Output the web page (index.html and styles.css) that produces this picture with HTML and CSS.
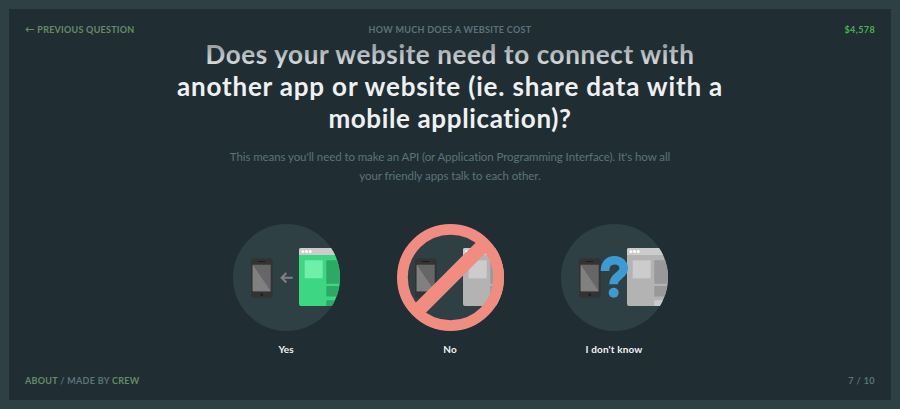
FILE: index.html
```
<!DOCTYPE html>
<html lang="en">
  <head>
    <meta charset="utf-8">
    <title>How much does a website cost</title>
    <link rel="stylesheet" href="styles.css">
  </head>
  <body>
    <div class="panel">
      <header class="top-bar">
        <a class="previous" href="#"><span class="arrow">←</span> Previous question</a>
        <span class="quiz-title">How much does a website cost</span>
        <span class="price">$4,578</span>
      </header>

      <main class="question">
        <h1>
          <span class="line line-1">Does your website need to connect with</span>
          <span class="line line-2">another app or website (ie. share data with a</span>
          <span class="line line-3">mobile application)?</span>
        </h1>
        <p class="hint">
          <span class="line">This means you'll need to make an API (or Application Programming Interface). It's how all</span>
          <span class="line">your friendly apps talk to each other.</span>
        </p>

        <div class="answers">
          <a class="answer" href="#">
            <svg class="icon" viewBox="0 0 107 107">
              <defs>
                <clipPath id="circle"><circle cx="53.5" cy="53.5" r="53.5"/></clipPath>
                <g id="phone">
                  <rect x="18" y="34.3" width="21.7" height="39.4" rx="2" fill="#333"/>
                  <rect x="19.7" y="40.7" width="18" height="26.6" fill="#666"/>
                  <path d="M19.7 40.7L37.7 67.3H19.7z" fill="#808080"/>
                  <path d="M25 37.5h7" stroke="#1c1c1c" stroke-width="1"/>
                  <circle cx="28.7" cy="70.8" r="1.3" fill="#1c1c1c"/>
                </g>
                <g id="window">
                  <rect class="page" x="66" y="24" width="60" height="58" rx="2"/>
                  <path d="M66 31v-5q0-2 2-2h50v7z" fill="#ccc"/>
                  <g fill="#fff">
                    <circle cx="69.8" cy="27.5" r="1.5"/>
                    <circle cx="73.5" cy="27.5" r="1.5"/>
                    <circle cx="77.2" cy="27.5" r="1.5"/>
                  </g>
                  <rect class="photo" x="71.7" y="36.3" width="18" height="18"/>
                  <path class="block" d="M93.3 36.3H118v23.4H93.3zM93.3 62H118v10.4H93.3z"/>
                  <path class="last" d="M93.3 76.3H118V82H93.3z"/>
                </g>
              </defs>
              <circle cx="53.5" cy="53.5" r="53.5" fill="#2f4045"/>
              <use href="#phone"/>
              <path d="M59.7 53.7H49M53.3 49l-4.6 4.7 4.6 4.7" fill="none" stroke="#808080" stroke-width="2.1"/>
              <g clip-path="url(#circle)"><use class="green" href="#window"/></g>
            </svg>
            <span>Yes</span>
          </a>

          <a class="answer" href="#">
            <svg class="icon" viewBox="0 0 107 107">
              <circle cx="53.5" cy="53.5" r="53" fill="#2f4045"/>
              <use href="#phone"/>
              <g clip-path="url(#circle)"><use class="gray" href="#window"/></g>
              <g fill="none" stroke="#f18c80">
                <circle cx="53.5" cy="53.5" r="48.1" stroke-width="10.8"/>
                <path d="M21.5 86L86 21.5" stroke-width="14.4"/>
              </g>
            </svg>
            <span>No</span>
          </a>

          <a class="answer" href="#">
            <svg class="icon" viewBox="0 0 107 107">
              <circle cx="53.5" cy="53.5" r="53.5" fill="#2f4045"/>
              <use href="#phone"/>
              <g clip-path="url(#circle)"><use class="gray" href="#window"/></g>
              <path d="M44 47C44 40 48 36.3 53.5 36.3S62.7 40 62.7 44.6C62.7 52 52.6 51 52.6 60.3" fill="none" stroke="#3d9bd3" stroke-width="8.6"/>
              <circle cx="52.7" cy="68.7" r="5" fill="#3d9bd3"/>
            </svg>
            <span class="unsure">I don't know</span>
          </a>
        </div>
      </main>

      <footer class="bottom-bar">
        <span class="credits"><a href="#">About</a> / Made by <a href="#">Crew</a></span>
        <span class="progress">7 / 10</span>
      </footer>
    </div>
  </body>
</html>
```

FILE: styles.css
```
* {
  box-sizing: border-box;
  margin: 0;
  padding: 0;
}

body {
  height: 409px;
  padding: 9px;
  overflow: hidden;
  background-color: #2f4045;
  font-family: Lato, sans-serif;
}

a {
  color: inherit;
  text-decoration: none;
}

.panel {
  position: relative;
  display: flex;
  flex-direction: column;
  height: 391px;
  background-color: #202e34;
}

/* Lies over the question and fades it out */
.top-bar {
  position: absolute;
  top: 0;
  left: 0;
  right: 0;
  z-index: 1;
  display: grid;
  grid-template-columns: 1fr auto 1fr;
  height: 62px;
  padding: 14px 16px 0;
  background: linear-gradient(#202e34, rgba(32, 46, 52, 0));
}

.top-bar,
.bottom-bar {
  font-size: 9px;
  font-weight: 700;
  line-height: 14px;
  letter-spacing: 0.3px;
  text-transform: uppercase;
  color: #5d7277;
}

.previous,
.credits a {
  color: #668a69;
}

.previous {
  letter-spacing: 0.25px;
}

.arrow {
  font-family: "DejaVu Sans", sans-serif;
  font-size: 11.5px;
  font-weight: 400;
  line-height: 1;
}

.price {
  text-align: right;
  color: #4caf50;
}

.price,
.progress {
  letter-spacing: 0.4px;
}

.question {
  flex: 1;
  padding-top: 29px;
  text-align: center;
}

.line {
  display: block;
  white-space: nowrap;
}

h1 {
  font-size: 26px;
  font-weight: 700;
  line-height: 32px;
  letter-spacing: 0.63px;
  color: #eef0f1;
}

.line-2 {
  letter-spacing: 0.83px;
}

.hint {
  margin-top: 14px;
  font-size: 11.5px;
  line-height: 18.5px;
  letter-spacing: -0.08px;
  color: #5d7277;
}

.answers {
  display: flex;
  justify-content: center;
  gap: 57px;
  margin-top: 38.5px;
}

.answer {
  display: flex;
  flex-direction: column;
  align-items: center;
  gap: 11px;
  width: 107px;
  font-size: 10px;
  font-weight: 700;
  line-height: 14px;
  color: #f0f2f3;
}

.unsure {
  letter-spacing: 0.15px;
}

.icon {
  display: block;
  width: 107px;
  height: 107px;
}

.green {
  --page: #3dd783;
  --photo: #70efaa;
  --block: #2da966;
  --last: #2da966;
}

.gray {
  --page: #b3b3b3;
  --photo: #ccc;
  --block: #999;
  --last: #ccc;
}

.page {
  fill: var(--page);
}

.photo {
  fill: var(--photo);
}

.block {
  fill: var(--block);
}

.last {
  fill: var(--last);
}

.bottom-bar {
  display: flex;
  justify-content: space-between;
  padding: 0 16px 12px;
}
```
